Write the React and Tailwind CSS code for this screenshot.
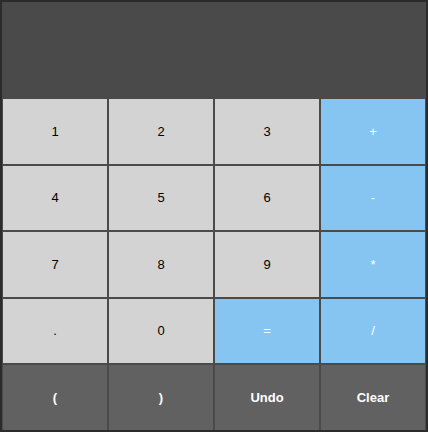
import React from 'react'

const keys = [
  { label: '1', kind: 'num' },
  { label: '2', kind: 'num' },
  { label: '3', kind: 'num' },
  { label: '+', kind: 'op' },
  { label: '4', kind: 'num' },
  { label: '5', kind: 'num' },
  { label: '6', kind: 'num' },
  { label: '-', kind: 'op' },
  { label: '7', kind: 'num' },
  { label: '8', kind: 'num' },
  { label: '9', kind: 'num' },
  { label: '*', kind: 'op' },
  { label: '.', kind: 'num' },
  { label: '0', kind: 'num' },
  { label: '=', kind: 'op' },
  { label: '/', kind: 'op' },
  { label: '(', kind: 'fn' },
  { label: ')', kind: 'fn' },
  { label: 'Undo', kind: 'fn' },
  { label: 'Clear', kind: 'fn' },
]

const styles = {
  num: 'bg-[#d3d3d3] text-black',
  op: 'bg-[#86c5f2] text-white',
  fn: 'bg-[#616161] text-white font-bold',
}

export default function App() {
  return (
    <div className="w-[428px] h-[432px] border-2 border-[#2b2b2b] bg-[#4a4a4a] flex flex-col font-['Liberation_Sans',Arial,sans-serif] text-[13px]">
      <div className="h-[96px] bg-[#4a4a4a]"></div>
      <div className="flex-1 grid grid-cols-4 grid-rows-5 gap-[2px] px-[1px] pt-[1px]">
        {keys.map((k) => (
          <button key={k.label} className={'flex items-center justify-center ' + styles[k.kind]}>
            {k.label}
          </button>
        ))}
      </div>
    </div>
  )
}
